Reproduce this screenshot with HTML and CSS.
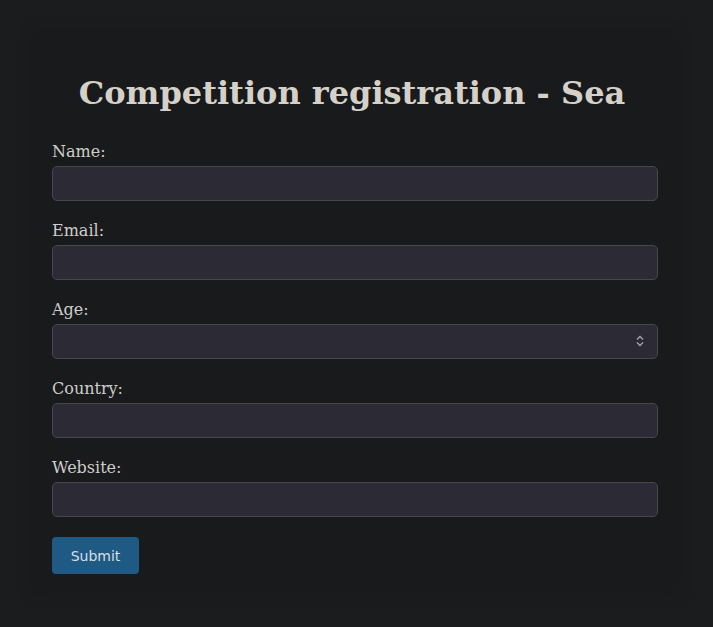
FILE: index.html
```html
<!DOCTYPE html>
<html>
<head>
<meta charset="utf-8">
<link rel="stylesheet" href="styles.css">
</head>
<body>
<div class="card">
  <h1 class="title">Competition registration - Sea</h1>
  <form class="form">
    <div class="field">
      <label class="label">Name:</label>
      <input class="input" type="text">
    </div>
    <div class="field">
      <label class="label">Email:</label>
      <input class="input" type="text">
    </div>
    <div class="field">
      <label class="label">Age:</label>
      <div class="select-wrap">
        <div class="input select"></div>
        <svg class="chev" width="10" height="14" viewBox="0 0 10 14"><path d="M2 5.5 L5 2.5 L8 5.5 M2 8.5 L5 11.5 L8 8.5" fill="none" stroke="#a6a6b0" stroke-width="1.3"/></svg>
      </div>
    </div>
    <div class="field">
      <label class="label">Country:</label>
      <input class="input" type="text">
    </div>
    <div class="field">
      <label class="label">Website:</label>
      <input class="input" type="text">
    </div>
    <button class="btn" type="button">Submit</button>
  </form>
</div>
</body>
</html>
```
FILE: styles.css
```css
html, body {
  margin: 0;
  padding: 0;
  background: #1b1c1e;
}
body {
  padding: 32px 35px 32px 32px;
  font-family: "DejaVu Serif", serif;
  color: #d2d0cc;
}
.card {
  background: #191a1c;
  padding: 20px;
  box-shadow: 0 0 16px rgba(0,0,0,0.12);
}
.title {
  margin: 23px 0 30px;
  padding-right: 6px;
  text-align: center;
  font-size: 32px;
  font-weight: bold;
  color: #d5d1c9;
  line-height: 37px;
}
.form {
  display: flex;
  flex-direction: column;
}
.field {
  display: flex;
  flex-direction: column;
  margin-bottom: 20px;
}
.label {
  font-size: 16px;
  line-height: 19px;
  margin-bottom: 5px;
  color: #cfcdca;
}
.input {
  box-sizing: border-box;
  height: 35px;
  width: 100%;
  background: #2b2a35;
  border: 1px solid #46464c;
  border-radius: 5px;
  margin: 0;
}
.select-wrap {
  position: relative;
}
.chev {
  position: absolute;
  right: 13px;
  top: 10px;
}
.btn {
  align-self: flex-start;
  width: 87px;
  height: 37px;
  background: #1e5a84;
  border: none;
  border-radius: 4px;
  color: #d8dee4;
  font-family: "DejaVu Sans", sans-serif;
  font-size: 14px;
  padding: 0;
}
```
